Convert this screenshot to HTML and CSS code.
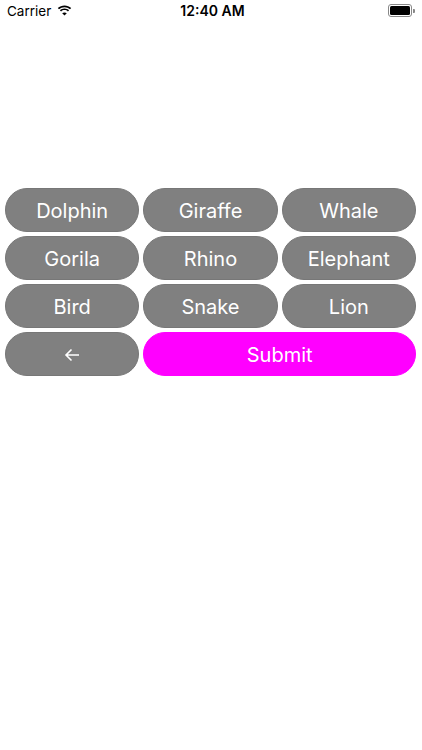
FILE: index.html
```html
<!DOCTYPE html>
<html>
<head>
<meta charset="utf-8">
<link rel="stylesheet" href="styles.css">
</head>
<body>
<div class="status">
  <div class="left">
    <span class="carrier">Carrier</span>
    <svg class="wifi" width="15" height="11" viewBox="0 0 15 11">
      <path d="M7.5 2.2c2.1 0 4 .8 5.5 2.1l1.2-1.2C12.4 1.4 10 .4 7.5.4S2.6 1.4.8 3.1L2 4.3c1.5-1.3 3.4-2.1 5.5-2.1z" fill="#000"/>
      <path d="M7.5 5.1c1.3 0 2.5.5 3.4 1.3l1.2-1.2C10.9 4.1 9.3 3.4 7.5 3.4S4.1 4.1 2.9 5.2l1.2 1.2c.9-.8 2.1-1.3 3.4-1.3z" fill="#000"/>
      <path d="M7.5 10.6l2.3-2.3c-.6-.6-1.4-.9-2.3-.9s-1.7.3-2.3.9z" fill="#000"/>
    </svg>
  </div>
  <div class="time">12:40 AM</div>
  <div class="right">
    <div class="battery"><div class="level"></div></div>
    <div class="nub"></div>
  </div>
</div>
<div class="grid">
  <button class="btn">Dolphin</button>
  <button class="btn">Giraffe</button>
  <button class="btn">Whale</button>
  <button class="btn">Gorila</button>
  <button class="btn">Rhino</button>
  <button class="btn">Elephant</button>
  <button class="btn">Bird</button>
  <button class="btn">Snake</button>
  <button class="btn">Lion</button>
  <button class="btn back">
    <svg width="16" height="14" viewBox="0 0 16 14"><path d="M15 7H2M7.5 1.5L2 7l5.5 5.5" fill="none" stroke="#fff" stroke-width="1.6"/></svg>
  </button>
  <button class="btn submit">Submit</button>
</div>
</body>
</html>
```

FILE: styles.css
```css
html, body {
  margin: 0;
  padding: 0;
  background: #fff;
  font-family: Inter, "Liberation Sans", Arial, sans-serif;
}
body {
  width: 422px;
  height: 750px;
}
.status {
  height: 21px;
  display: flex;
  align-items: center;
  justify-content: space-between;
  padding: 0 7px 0 7px;
  font-size: 14px;
  color: #000;
}
.left {
  display: flex;
  align-items: center;
  gap: 6px;
  width: 100px;
}
.carrier {
  font-size: 13.5px;
}
.wifi {
  margin-top: -1px;
}
.time {
  font-weight: 600;
  font-size: 14px;
  margin-left: 3px;
}
.right {
  display: flex;
  align-items: center;
  justify-content: flex-end;
  width: 100px;
  gap: 1px;
}
.battery {
  width: 20px;
  height: 9px;
  border: 1px solid #888;
  border-radius: 3px;
  padding: 1px;
  display: flex;
}
.level {
  flex: 1;
  background: #000;
  border-radius: 1.5px;
}
.nub {
  width: 1.5px;
  height: 4px;
  background: #888;
  border-radius: 0 1px 1px 0;
}
.grid {
  margin-top: 167px;
  padding: 0 6px 0 5px;
  display: grid;
  grid-template-columns: repeat(3, 1fr);
  column-gap: 4px;
  row-gap: 4px;
}
.btn {
  height: 44px;
  border: 1px solid #777;
  border-radius: 22px;
  background: #808080;
  color: #fff;
  font-family: Inter, "Liberation Sans", Arial, sans-serif;
  font-size: 20px;
  padding: 1px 0 0 0;
  display: flex;
  align-items: center;
  justify-content: center;
}
.submit {
  grid-column: span 2;
  background: #ff00ff;
  border-color: #ff00ff;
}
.back svg {
  display: block;
}
```
